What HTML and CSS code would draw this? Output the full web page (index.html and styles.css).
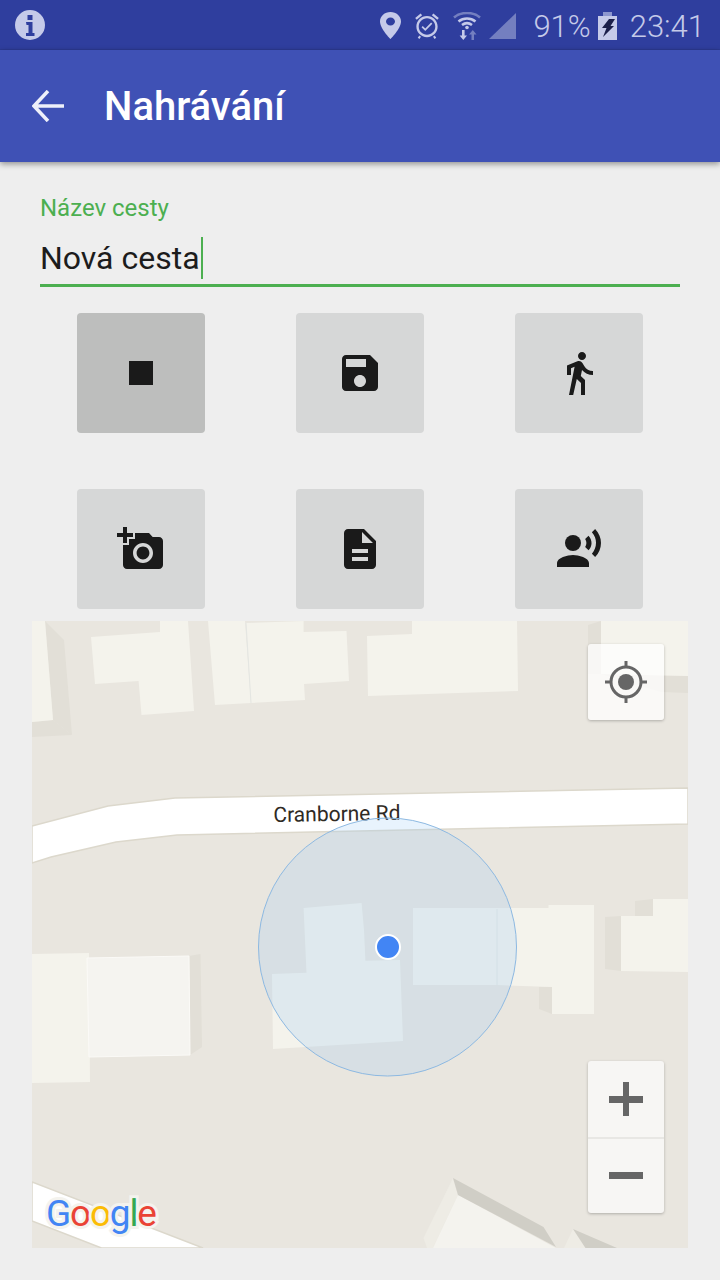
FILE: index.html
```html
<!DOCTYPE html>
<html lang="cs">
<head>
  <meta charset="UTF-8">
  <title>Nahrávání</title>
  <link rel="stylesheet" href="styles.css">
</head>
<body>

  <div class="status-bar">
    <svg class="st-info" viewBox="0 0 30 30"><path fill-rule="evenodd" d="M15 0a15 15 0 1 0 0 30a15 15 0 1 0 0-30zM12.5 5h5v5h-5zM11 12h6.500v11h2v3h-8.500v-3h2.500v-8h-2z"/></svg>
    <div class="st-right">
      <svg class="st-pin" viewBox="5 2 14 20" preserveAspectRatio="none"><path d="M12 2C8.130 2 5 5.130 5 9c0 5.250 7 13 7 13s7-7.750 7-13c0-3.870-3.130-7-7-7zm0 10c-1.660 0-3-1.340-3-3s1.340-3 3-3 3 1.340 3 3-1.340 3-3 3z"/></svg>
      <svg class="st-alarm" viewBox="2 1.500 20 22"><path d="M22 5.720l-4.600-3.860-1.290 1.530 4.600 3.860L22 5.720zM7.880 3.390L6.600 1.860 2 5.710l1.290 1.530 4.590-3.850zM12 4c-4.970 0-9 4.030-9 9s4.020 9 9 9c4.970 0 9-4.030 9-9s-4.030-9-9-9zm0 16c-3.870 0-7-3.130-7-7s3.130-7 7-7 7 3.130 7 7-3.130 7-7 7zm-1.460-5.470L8.410 12.400l-1.060 1.060 3.180 3.180 6-6-1.060-1.060-4.930 4.950z"/><path d="M5.500 20.500l1.400 1 -1.300 2-1.400-1zM18.500 20.500l-1.400 1 1.300 2 1.400-1z"/></svg>
      <svg class="st-wifi" viewBox="0 0 28 28">
        <path class="wifi-off" d="M1 5.500C8 -0.500 20 -0.500 27 5.500"/>
        <path class="wifi-on" d="M5.500 9.500C10.500 5.500 17.500 5.500 22.500 9.500M9 13C12 10.800 16 10.800 19 13"/>
        <circle class="wifi-dot" cx="14" cy="15.500" r="1.800"/>
        <path class="wifi-dot" d="M9 18h2.600v5.500h2.400L10.300 28L6.600 23.500H9z"/>
        <path class="wifi-fade" d="M18.500 28v-5.500H16l3.800-4.500l3.700 4.500H21V28z"/>
      </svg>
      <svg class="st-signal" viewBox="0 0 27 26"><path d="M27 0V26H0z"/></svg>
      <span class="st-text st-pct">91%</span>
      <svg class="st-batt" viewBox="0 0 19 28">
        <path class="batt-cap" d="M5 0h9v4H5z"/>
        <path class="batt-body" d="M0 4h19v24H0z"/>
        <path class="batt-bolt" d="M11 7h6L12.500 14H16L5 25L8.500 16H4z"/>
      </svg>
      <span class="st-text st-time">23:41</span>
    </div>
  </div>

  <div class="app-bar">
    <svg class="back" viewBox="0 0 32 32"><path d="M32 16H3M16 1L2 16L16 31"/></svg>
    <h1 class="app-title">Nahrávání</h1>
  </div>

  <div class="field">
    <label class="field-label">Název cesty</label>
    <div class="field-input">Nová cesta<span class="caret"></span></div>
  </div>

  <div class="actions">
    <button class="action pressed"><svg viewBox="0 0 24 24"><path d="M6 6h12v12H6z"/></svg></button>
    <button class="action"><svg viewBox="0 0 24 24"><path d="M17 3H5c-1.110 0-2 .9-2 2v14c0 1.100.89 2 2 2h14c1.100 0 2-.9 2-2V7l-4-4zm-5 16c-1.660 0-3-1.340-3-3s1.340-3 3-3 3 1.340 3 3-1.340 3-3 3zm3-10H5V5h10v4z"/></svg></button>
    <button class="action"><svg viewBox="0 0 24 24"><path d="M13.500 5.500c1.100 0 2-.9 2-2s-.9-2-2-2-2 .9-2 2 .9 2 2 2zM9.800 8.900L7 23h2.100l1.800-8 2.100 2v6h2v-7.500l-2.100-2 .6-3C14.800 12 16.800 13 19 13v-2c-1.900 0-3.500-1-4.300-2.400l-1-1.600c-.4-.6-1-1-1.700-1-.3 0-.5.1-.8.1L6 8.300V13h2V9.600l1.800-.7"/></svg></button>
    <button class="action"><svg viewBox="0 0 24 24"><path d="M3 4V1h2v3h3v2H5v3H3V6H0V4h3zm3 6V7h3V4h7l1.830 2H21c1.100 0 2 .9 2 2v12c0 1.100-.9 2-2 2H5c-1.100 0-2-.9-2-2V10h3zm7 9c2.760 0 5-2.240 5-5s-2.240-5-5-5-5 2.240-5 5 2.240 5 5 5zm-3.200-5c0 1.770 1.430 3.200 3.200 3.200s3.200-1.430 3.200-3.200-1.430-3.200-3.200-3.200-3.200 1.430-3.200 3.200z"/></svg></button>
    <button class="action"><svg viewBox="0 0 24 24"><path d="M14 2H6c-1.100 0-1.990.9-1.990 2L4 20c0 1.100.89 2 1.990 2H18c1.100 0 2-.9 2-2V8l-6-6zm2 16H8v-2h8v2zm0-4H8v-2h8v2zm-3-5V3.500L18.500 9H13z"/></svg></button>
    <button class="action"><svg viewBox="0 0 24 24"><circle cx="9" cy="9" r="4"/><path d="M9 15c-2.670 0-8 1.340-8 4v2h16v-2c0-2.660-5.330-4-8-4zm7.760-9.640l-1.680 1.690c.84 1.180.84 2.710 0 3.890l1.680 1.690c2.020-2.020 2.020-5.070 0-7.270zM20.070 2l-1.630 1.630c2.770 3.020 2.770 7.560 0 10.740L20.070 16c3.900-3.890 3.910-9.950 0-14z"/></svg></button>
  </div>

  <div class="map">
    <svg class="map-canvas" viewBox="32 621 656 627">
      <!-- side walls -->
      <g class="wall">
        <path d="M45 621L64 640L72 735L53 720z"/>
        <path d="M32 722L53 720L72 735L32 737z"/>
        <path d="M588 625L601 621V674L661 692L688 693V676L601 674H588z"/>
        <path d="M539 987H552V1014L539 1009z"/>
        <path d="M605 917L621 916V971L605 969z"/>
        <path d="M635 901L653 899V916H635z"/>
        <path d="M189 956L200.500 954L202 1047L190 1055z"/>
      </g>
      <!-- buildings -->
      <g class="building">
        <path d="M32 621H45L53 720L32 722z"/>
        <path d="M91 637L160 632V621H188L194 711L141.500 715L138.600 681L95 684z"/>
        <path d="M208 621H245L251 703L215 705z"/>
        <path d="M246 623L303.600 621V632L346.500 631L349 681L304 684L305 700L251 703z"/>
        <path d="M367 636L412 634V621H517L518 691L368 696z"/>
        <path d="M601 621H688V676L601 674z"/>
        <path d="M303.600 908L361.600 903L364 930L365.400 960.700L400 960L403 1041L273 1049L272 974L306.500 972.700z"/>
        <path d="M413 908H548.500V905H594V1014H552V987L497 985H413z"/>
        <path d="M621 916H653V899H688V972L621 971z"/>
        <path d="M32 954L89 953L90 1082L32 1083z"/>
      </g>
      <path class="building-2" d="M87 958L189 956L190 1055L89 1057z"/>
      <path class="seam" d="M497 909V985M246 623L251 703"/>
      <!-- roads -->
      <path class="road" d="M32 826L108 806L175 798L688 788V824L177 835L116 842L51 857L32 863z"/>
      <path class="road" d="M32 1182L203 1248H101.500L32 1221z"/>
      <text class="road-name" x="337" y="821" transform="rotate(-1 337 821)">Cranborne Rd</text>
      <!-- angled block at the bottom -->
      <path class="roof-light" d="M453 1178L458 1195L433 1248H427L423.500 1238z"/>
      <path class="roof" d="M458 1195L556 1248H433z"/>
      <path class="wall-dark" d="M453 1178L543.500 1227L556 1247L458 1195z"/>
      <path class="roof-light" d="M573 1229L585.500 1248H564z"/>
      <path class="wall-dark" d="M573 1229L617 1248H585.500z"/>
      <!-- accuracy circle -->
      <circle class="accuracy" cx="387.500" cy="947" r="129"/>
      <circle class="me" cx="388" cy="947" r="12"/>
    </svg>

    <div class="map-btn locate">
      <svg viewBox="0 0 44 44"><circle class="loc-ring" cx="22" cy="22" r="15"/><circle class="loc-dot" cx="22" cy="22" r="8"/><path class="loc-ring" d="M22 1V7M22 37V43M1 22H7M37 22H43"/></svg>
    </div>
    <div class="map-zoom">
      <div class="zoom-part"><span class="bar-h"></span><span class="bar-v"></span></div>
      <div class="zoom-part"><span class="bar-h"></span></div>
    </div>
    <div class="google"><span class="g-blue">G</span><span class="g-red">o</span><span class="g-yellow">o</span><span class="g-blue">g</span><span class="g-green">l</span><span class="g-red">e</span></div>
  </div>

</body>
</html>
```

FILE: styles.css
```css
body {
  margin: 0;
  height: 1280px;
  overflow: hidden;
  background-color: #eeeeee;
  font-family: Roboto, sans-serif;
}

.status-bar {
  display: flex;
  justify-content: space-between;
  align-items: center;
  height: 50px;
  padding: 2px 15px 0;
  box-sizing: border-box;
  background-color: #2f3e9e;
  border-bottom: 1px solid #2c3a94;
}

.status-bar svg {
  display: block;
  flex: none;
  fill: #c5cae9;
}

.st-info {
  width: 30px;
  height: 30px;
  margin-top: -2px;
}

.st-right {
  display: flex;
  align-items: center;
}

.st-pin {
  width: 21px;
  height: 27px;
  margin-right: 14px;
}

.st-alarm {
  width: 24px;
  height: 26px;
  margin-right: 14px;
}

.st-wifi {
  width: 28px;
  height: 28px;
  margin-right: 8px;
}

.wifi-off,
.wifi-on {
  fill: none;
  stroke-width: 2.6;
}

.wifi-off {
  stroke: #747fc0;
}

.wifi-on {
  stroke: #c5cae9;
}

.status-bar .wifi-fade {
  fill: #747fc0;
}

.status-bar .st-signal {
  width: 27px;
  height: 26px;
  margin-right: 17px;
  fill: #747fc0;
}

.st-text {
  padding-top: 2px;
  color: #c5cae9;
  font-size: 31px;
  font-weight: 300;
  line-height: 36px;
}

.st-pct {
  margin-right: 7px;
}

.st-batt {
  width: 19px;
  height: 28px;
  margin-right: 13px;
}

.status-bar .batt-cap {
  fill: #8d97cf;
}

.status-bar .batt-bolt {
  fill: #1b1f4a;
}

.app-bar {
  position: relative;
  display: flex;
  align-items: center;
  height: 112px;
  background-color: #3f51b5;
  box-shadow: 0 2px 6px rgba(0, 0, 0, 0.4);
}

.back {
  width: 32px;
  height: 32px;
  margin-left: 32px;
  fill: none;
  stroke: #eef0fa;
  stroke-width: 3.5;
}

.app-title {
  margin: 0 0 0 40px;
  color: #ffffff;
  font-size: 40px;
  font-weight: 500;
}

.field {
  padding: 32px 40px 0;
}

.field-label {
  display: block;
  color: #4caf50;
  font-size: 24px;
  line-height: 28px;
}

.field-input {
  display: flex;
  align-items: center;
  height: 42px;
  margin-top: 15px;
  padding-bottom: 5px;
  border-bottom: 3px solid #4caf50;
  color: #1c1c1c;
  font-size: 32px;
}

.caret {
  width: 2px;
  height: 42px;
  margin-left: 1px;
  background-color: #4caf50;
}

.actions {
  display: grid;
  grid-template-columns: repeat(3, 128px);
  justify-content: space-between;
  row-gap: 56px;
  margin-top: 26px;
  padding: 0 77px;
}

.action {
  display: flex;
  justify-content: center;
  align-items: center;
  width: 128px;
  height: 120px;
  padding: 0;
  border: none;
  border-radius: 4px;
  background-color: #d6d7d7;
}

.action.pressed {
  background-color: #bdbebd;
}

.action svg {
  width: 48px;
  height: 48px;
  fill: #1a1a1a;
}

.map {
  position: relative;
  height: 627px;
  margin: 12px 32px 0;
  overflow: hidden;
  background-color: #e9e6df;
}

.map-canvas {
  display: block;
  width: 656px;
  height: 627px;
}

.wall {
  fill: #e2dfd7;
}

.building {
  fill: #f4f3ec;
}

.building-2 {
  fill: #f5f4f0;
  stroke: #fbfaf7;
  stroke-width: 1;
}

.seam {
  fill: none;
  stroke: #e4e6e2;
  stroke-width: 1;
}

.road {
  fill: #ffffff;
  stroke: #dcd8cc;
  stroke-width: 1.5;
}

.road-name {
  fill: #2f2a24;
  font-family: Roboto, sans-serif;
  font-size: 21px;
  text-anchor: middle;
}

.roof {
  fill: #f4f3ee;
}

.roof-light {
  fill: #eeece5;
}

.wall-dark {
  fill: #d0cec6;
}

.accuracy {
  fill: rgba(150, 200, 245, 0.22);
  stroke: #8db9e2;
  stroke-width: 1;
}

.me {
  fill: #4285f4;
  stroke: #ffffff;
  stroke-width: 2;
}

.map-btn {
  position: absolute;
  top: 23px;
  right: 24px;
  display: flex;
  justify-content: center;
  align-items: center;
  width: 76px;
  height: 76px;
  border-radius: 3px;
  background-color: rgba(255, 255, 255, 0.75);
  box-shadow: 0 1px 3px rgba(0, 0, 0, 0.25);
}

.map-btn svg {
  width: 44px;
  height: 44px;
}

.loc-ring {
  fill: none;
  stroke: #666666;
  stroke-width: 3;
}

.loc-dot {
  fill: #666666;
}

.map-zoom {
  position: absolute;
  top: 440px;
  right: 24px;
  width: 76px;
  border-radius: 3px;
  background-color: #f7f6f4;
  box-shadow: 0 1px 3px rgba(0, 0, 0, 0.25);
}

.zoom-part {
  position: relative;
  height: 76px;
}

.zoom-part + .zoom-part {
  border-top: 2px solid #e8e7e4;
  height: 74px;
}

.bar-h {
  position: absolute;
  top: 35px;
  left: 21px;
  width: 34px;
  height: 7px;
  background-color: #666666;
}

.zoom-part + .zoom-part .bar-h {
  top: 33px;
}

.bar-v {
  position: absolute;
  top: 21px;
  left: 35px;
  width: 6px;
  height: 34px;
  background-color: #666666;
}

.google {
  position: absolute;
  left: 14px;
  bottom: 12px;
  font-family: Roboto, sans-serif;
  font-size: 37px;
  font-weight: 400;
  line-height: 44px;
  letter-spacing: -1.2px;
  -webkit-text-stroke: 6px #f4f3ee;
  paint-order: stroke fill;
}

.g-blue {
  color: #4285f4;
}

.g-red {
  color: #ea4335;
}

.g-yellow {
  color: #fbbc05;
}

.g-green {
  color: #34a853;
}
```
